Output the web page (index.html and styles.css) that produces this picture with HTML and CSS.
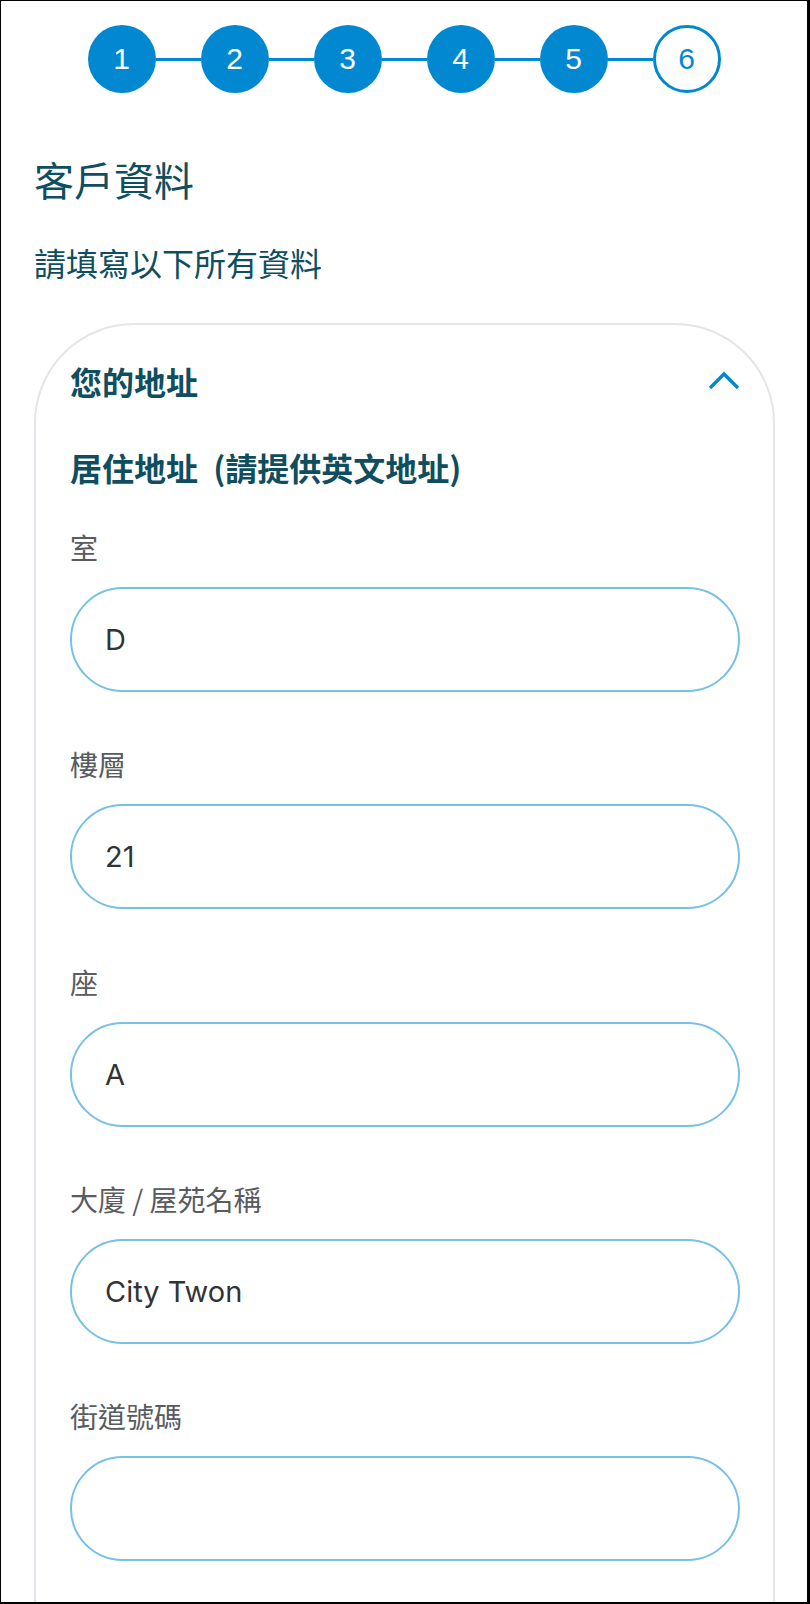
FILE: index.html
```html
<!DOCTYPE html>
<html lang="zh-Hant">
<head>
<meta charset="utf-8">
<title>客戶資料</title>
<link rel="stylesheet" href="styles.css">
</head>
<body>
<div class="page">
  <div class="stepper">
    <div class="step done">1</div><div class="bar"></div>
    <div class="step done">2</div><div class="bar"></div>
    <div class="step done">3</div><div class="bar"></div>
    <div class="step done">4</div><div class="bar"></div>
    <div class="step done">5</div><div class="bar"></div>
    <div class="step current">6</div>
  </div>

  <h1 class="title">客戶資料</h1>
  <p class="subtitle">請填寫以下所有資料</p>

  <section class="card">
    <div class="card-head">
      <h2 class="card-title">您的地址</h2>
      <svg class="chevron" width="32" height="20" viewBox="0 0 32 20" aria-hidden="true">
        <polyline points="2,17 16,3 30,17" fill="none" stroke="#0288d1" stroke-width="3.4" stroke-linejoin="miter"/>
      </svg>
    </div>
    <h3 class="section-title">居住地址 (請提供英文地址)</h3>

    <div class="fields">
      <div class="field">
        <label class="label" for="f1">室</label>
        <input class="input" id="f1" type="text" value="D" readonly>
      </div>
      <div class="field">
        <label class="label" for="f2">樓層</label>
        <input class="input" id="f2" type="text" value="21" readonly>
      </div>
      <div class="field">
        <label class="label" for="f3">座</label>
        <input class="input" id="f3" type="text" value="A" readonly>
      </div>
      <div class="field">
        <label class="label" for="f4">大廈 / 屋苑名稱</label>
        <input class="input" id="f4" type="text" value="City Twon" readonly>
      </div>
      <div class="field">
        <label class="label" for="f5">街道號碼</label>
        <input class="input" id="f5" type="text" value="" readonly>
      </div>
    </div>
  </section>
</div>
</body>
</html>
```

FILE: styles.css
```css
html, body {
  margin: 0;
  padding: 0;
  background: #ffffff;
}

.page {
  width: 810px;
  height: 1604px;
  box-sizing: border-box;
  border-style: solid;
  border-color: #000000;
  border-width: 1px 3px 2px 1px;
  overflow: hidden;
  background: #ffffff;
  font-family: "Noto Sans CJK TC", "Noto Sans", sans-serif;
}

/* stepper */
.stepper {
  display: flex;
  justify-content: center;
  align-items: center;
  padding-top: 24px;
}

.step {
  width: 68px;
  height: 68px;
  box-sizing: border-box;
  border-radius: 50%;
  display: flex;
  align-items: center;
  justify-content: center;
  font-family: "Liberation Sans", Arial, sans-serif;
  font-size: 30px;
  line-height: 1;
  flex: none;
}

.step.done {
  background: #0288d1;
  color: #ffffff;
}

.step.current {
  background: #ffffff;
  border: 3px solid #0288d1;
  color: #0288d1;
}

.bar {
  width: 45px;
  height: 3px;
  background: #0288d1;
  flex: none;
}

/* headings */
.title {
  margin: 58px 0 0 33px;
  font-size: 40px;
  line-height: 56px;
  font-weight: 400;
  color: #0f4e5f;
}

.subtitle {
  margin: 33px 0 0 33px;
  font-size: 32px;
  line-height: 44px;
  font-weight: 400;
  color: #0f4e5f;
}

/* card */
.card {
  margin: 39px 32px 0 33px;
  border: 2px solid #e3e5ea;
  border-radius: 100px;
  padding: 34px 33px 200px 34px;
}

.card-head {
  display: flex;
  align-items: center;
  justify-content: space-between;
  height: 44px;
}

.card-title {
  margin: 0;
  font-size: 32px;
  line-height: 44px;
  font-weight: 700;
  color: #0f4e5f;
}

.chevron {
  display: block;
  flex: none;
}

.section-title {
  margin: 42px 0 0 0;
  font-size: 32px;
  line-height: 44px;
  font-weight: 700;
  color: #0f4e5f;
  word-spacing: 8px;
}

.fields {
  margin-top: 38px;
  display: flex;
  flex-direction: column;
  gap: 52.25px;
}

.field {
  display: flex;
  flex-direction: column;
  gap: 20px;
}

.label {
  font-size: 28px;
  line-height: 40px;
  color: #585b60;
}

.input {
  display: block;
  width: 100%;
  height: 105px;
  box-sizing: border-box;
  margin: 0;
  border: 2px solid #78c0e5;
  border-radius: 53px;
  padding: 0 33px;
  background: #ffffff;
  font-family: "Inter", "Liberation Sans", sans-serif;
  font-size: 29px;
  color: #333333;
  outline: none;
}
```
